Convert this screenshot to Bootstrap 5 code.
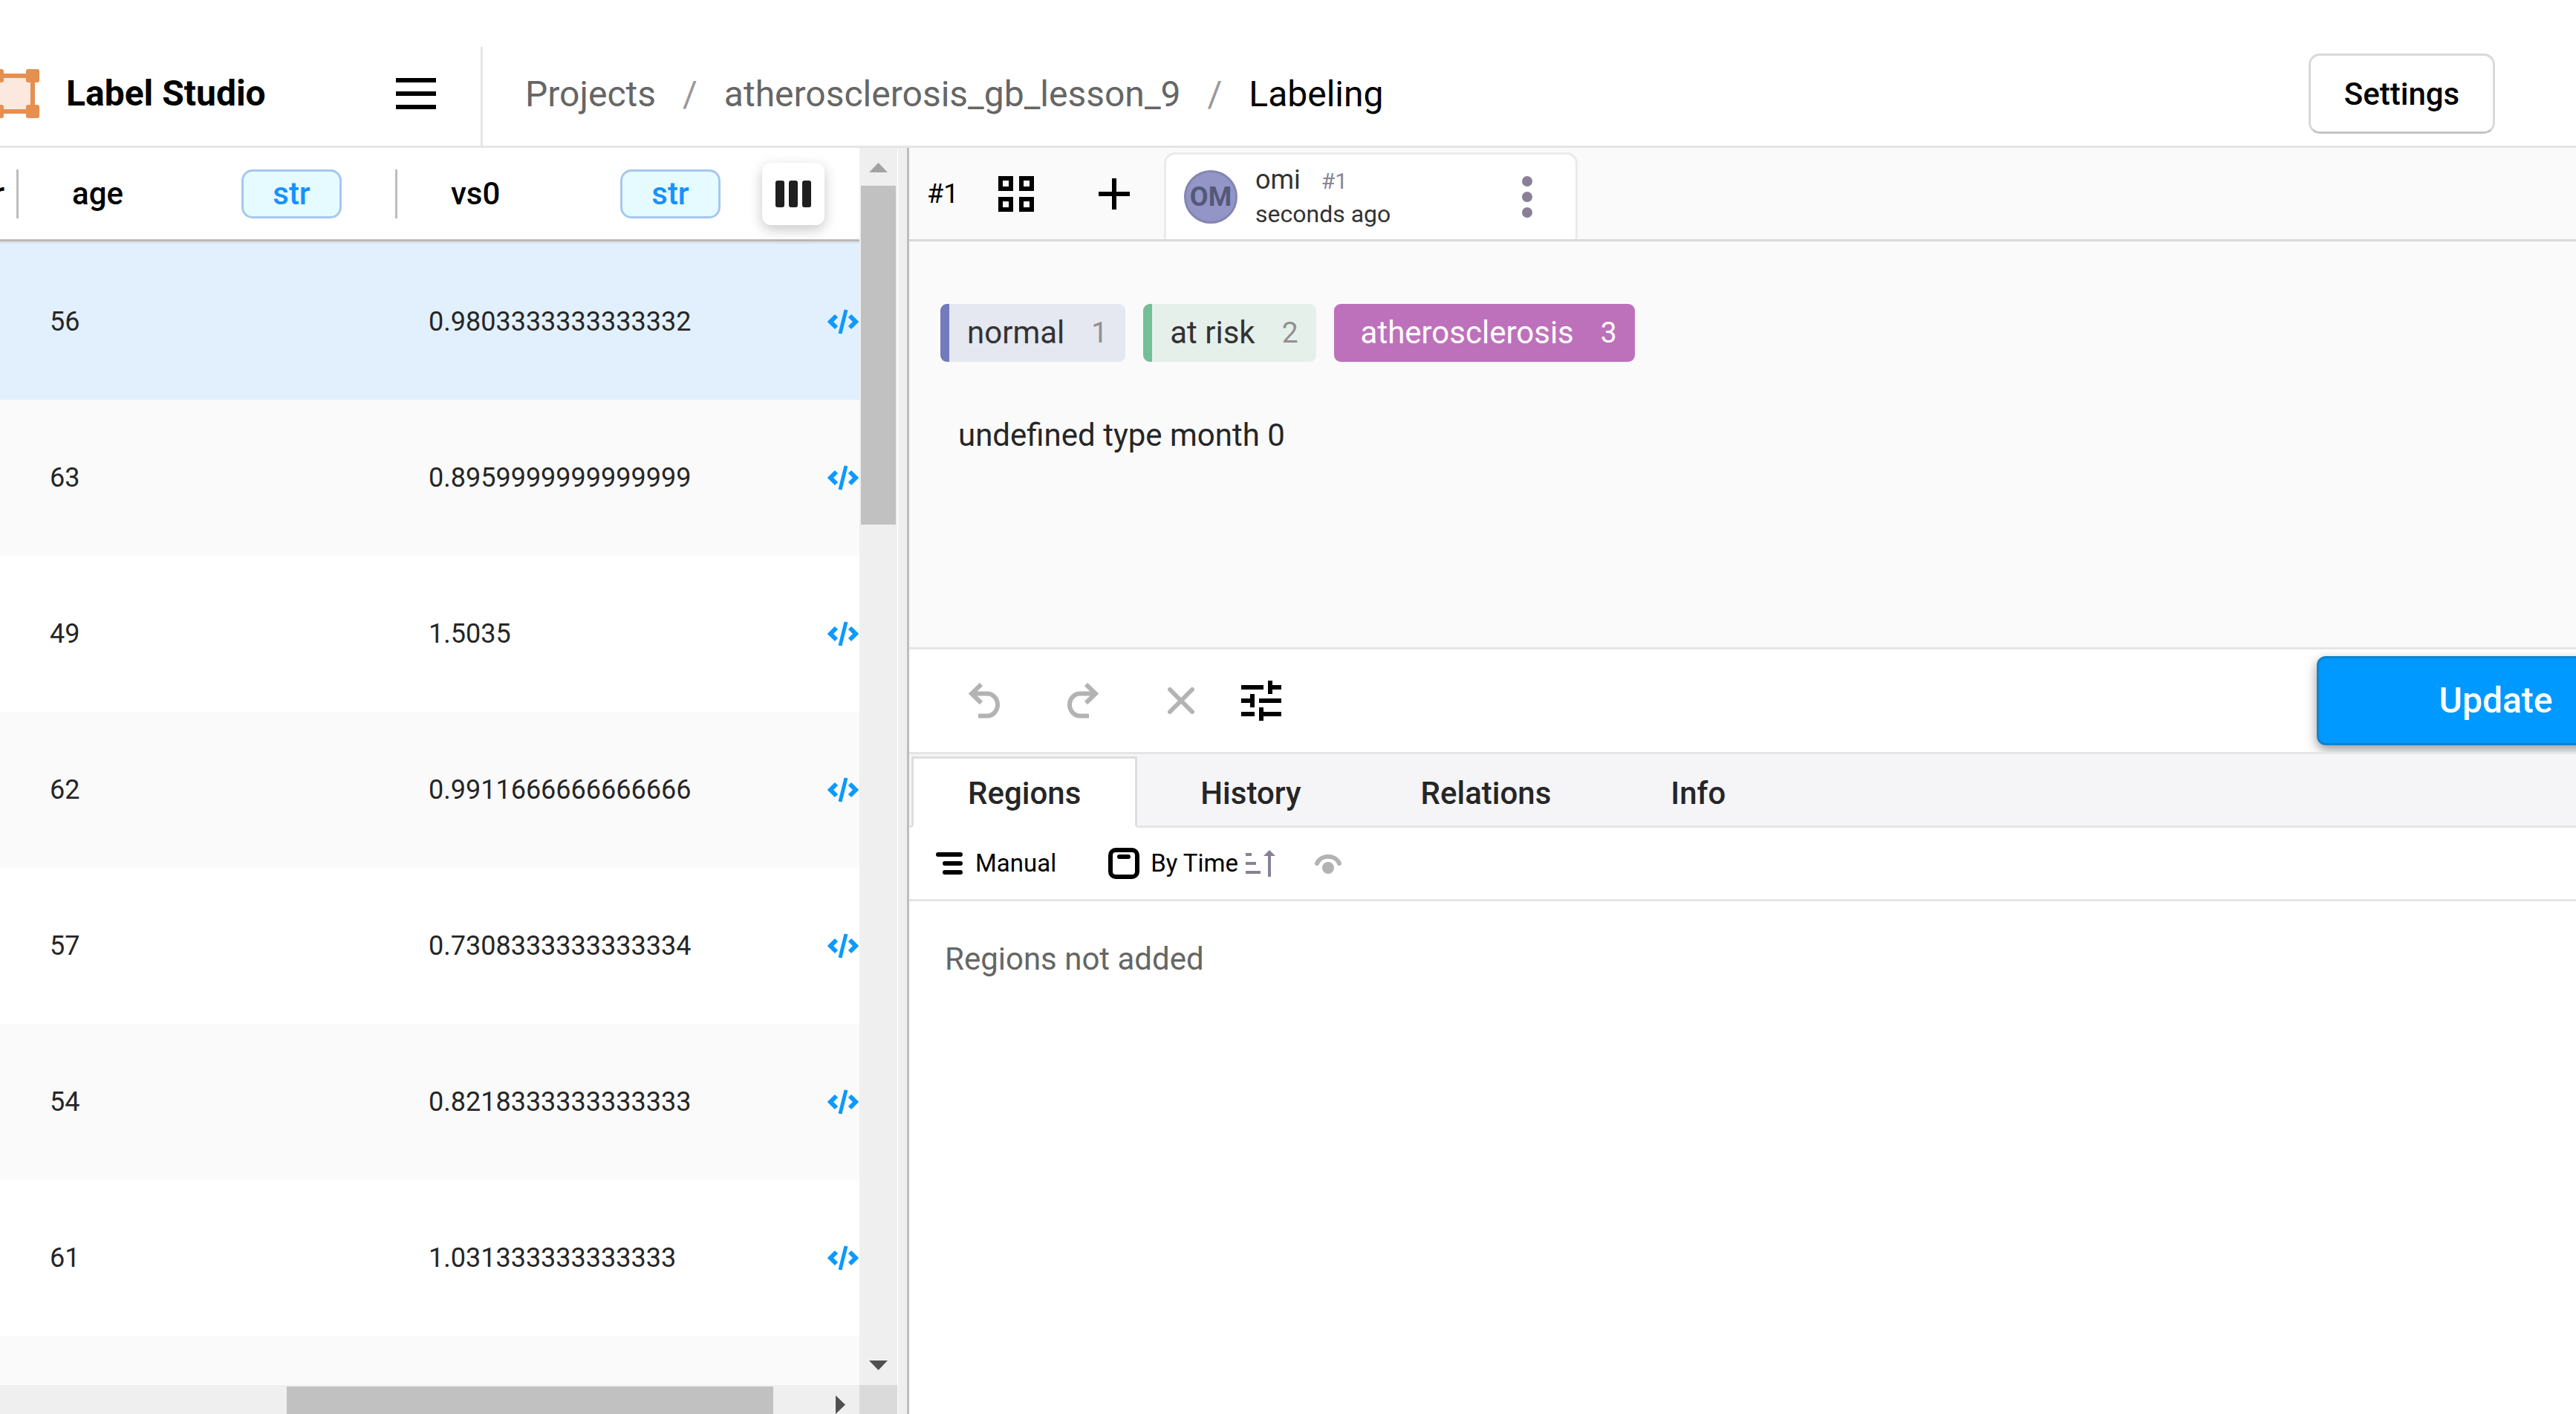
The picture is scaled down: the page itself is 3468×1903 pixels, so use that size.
<!DOCTYPE html>
<html lang="en">
<head>
<meta charset="utf-8">
<meta name="viewport" content="width=device-width, initial-scale=1">
<title>Label Studio</title>
<link href="https://cdn.jsdelivr.net/npm/bootstrap@5.3.0/dist/css/bootstrap.min.css" rel="stylesheet">
<style>
  :root { --rule: #e5e5e5; --split: #bdbdbd; --track: #efefef; --thumb: #c1c1c1; --panel: #fafafa; --muted: #666; --mauve: #898098; }
  body { font-family: Roboto, "Liberation Sans", sans-serif; font-size: 42px; line-height: 48px; color: #262626; background: #fff; }
  button { line-height: inherit; }
  svg { display: block; flex: none; }
  .plain-btn { background: none; border: 0; padding: 0; color: inherit; }

  /* top bar */
  .topbar { padding-top: 56px; border-bottom: 3px solid var(--rule); }
  .topbar-inner { height: 140px; }
  .brand { width: 647px; padding-right: 60px; font-size: 48px; font-weight: 700; color: #000; }
  .brand-link { color: #000; gap: 36px; }
  .crumbs { --bs-breadcrumb-divider: "/"; --bs-breadcrumb-item-padding-x: 36px; --bs-breadcrumb-divider-color: #999; font-size: 48px; padding: 0 0 6px 57px; height: 133px; border-left: 3px solid var(--rule); }
  .crumbs a { color: var(--muted); }
  .crumbs .breadcrumb-item.active { color: #000; }
  .settings-btn { --bs-btn-border-radius: 15px; width: 251px; height: 108px; margin-right: 109px; font-size: 42px; font-weight: 500; color: #000; background: #fff; border: 3px solid #d9d9d9; border-bottom-color: #c4c4c4; }

  /* data table */
  .data-pane { flex: 0 0 1224px; border-right: 3px solid var(--split); }
  .data-table { table-layout: fixed; width: 100%; border-collapse: collapse; }
  .data-table th { padding: 0 0 3px; background: #dde2ea; font-weight: 500; color: #000; }
  .head-cell { height: 126px; background: #fff; border-bottom: 3px solid #b9b9b9; overflow: hidden; }
  .head-cell.bars { overflow: visible; }
  .col-name { height: 66px; border-left: 3px solid #bdbdbd; padding-left: 72px; }
  .type-tag { width: 135px; height: 66px; border: 3px solid #a6c8ee; border-radius: 15px; background: #e6fbff; color: #1890ff; font-weight: 500; }
  .columns-btn { width: 84px; height: 84px; border-radius: 12px; background: #fff; border: 0; padding: 0; box-shadow: 0 6px 18px rgba(0,0,0,.22); }
  .data-table td { height: 210px; padding: 0 0 0 45px; font-size: 36px; vertical-align: middle; }
  .data-table td:first-child { padding: 0; }
  .data-table td.code-cell { padding: 0 1px 0 0; }
  .data-table tbody tr:nth-child(even) { background: var(--panel); }
  .data-table tbody tr.current { background: #e2f0fd; }
  .vbar { width: 51px; background: var(--track); padding: 20px 2px; }
  .vthumb { height: 456px; background: var(--thumb); margin-top: 18px; }
  .gutter { flex: none; width: 13px; background: var(--track); border-left: 1px solid #fff; }
  .hbar { height: 39px; background: var(--track); padding: 2px 19px 0 386px; }
  .hthumb { width: 655px; background: var(--thumb); }
  .corner { width: 51px; background: #dadada; }

  /* annotation area */
  .anno-bar { height: 126px; background: var(--panel); border-bottom: 3px solid #d9d9d9; padding-left: 24px; color: #000; }
  .task-id { font-size: 36px; width: 96px; }
  .anno-tab { width: 557px; height: 117px; border: 3px solid #ebebeb; border-bottom: 0; border-radius: 15px 15px 0 0; background: #fff; padding: 0 58px 0 24px; }
  .avatar { width: 72px; height: 72px; background: #9295c6; border: 3px solid #8386b2; color: #555877; font-size: 36px; font-weight: 700; flex: none; }
  .anno-name { font-size: 36px; line-height: 45px; color: #333; }
  .anno-num { font-size: 30px; color: #8a8494; margin-left: 28px; }
  .anno-when { font-size: 32px; line-height: 45px; color: #333; }
  .work-area { height: 549px; background: var(--panel); border-bottom: 3px solid var(--rule); padding: 84px 42px 0; }
  .label-chip { height: 78px; border: 0; border-left: 12px solid; border-radius: 9px; padding: 0 24px; gap: 36px; color: #333; }
  .label-chip .hint { font-size: 39px; color: #909090; }
  .chip-normal { background: #e5e7f1; border-color: #717bbe; }
  .chip-risk { background: #e5f0eb; border-color: #73bf98; }
  .chip-athero { background: #bd71bb; border-color: #bd71bb; color: #fff; }
  .chip-athero .hint { color: #fff; }
  .task-text { padding: 75px 24px 0; }
  .tool-row { height: 141px; border-bottom: 3px solid var(--rule); padding-left: 80px; overflow: hidden; }
  .update-btn { --bs-btn-border-radius: 12px; width: 482px; height: 120px; margin-right: -133px; background: #09f; border: 3px solid #0d83d0; color: #fff; font-size: 48px; font-weight: 500; box-shadow: 0 6px 15px rgba(0,0,0,.4); flex: none; }

  /* side tabs */
  .side-tabs { --bs-nav-tabs-border-width: 3px; --bs-nav-tabs-border-color: var(--rule); --bs-nav-tabs-border-radius: 0; height: 99px; background: #f5f5f8; padding: 3px 3px 0; gap: 9px; }
  .side-tabs .nav-link { height: 96px; padding: 4px 73px 0; font-weight: 500; color: #262626; }
  .side-tabs .nav-link.active { border-color: #dedede #dedede #fff; color: #262626; background: #fff; }
  .sort-row { height: 99px; border-bottom: 3px solid var(--rule); padding-left: 36px; font-size: 33px; font-weight: 500; color: #000; }
  .empty-note { padding: 54px 48px; color: var(--muted); }
</style>
</head>
<body class="vh-100 d-flex flex-column overflow-hidden">

<header class="topbar flex-shrink-0">
  <div class="topbar-inner d-flex align-items-center">
    <div class="brand d-flex align-items-center justify-content-between">
      <a href="#" class="brand-link d-flex align-items-center text-decoration-none">
        <svg width="53" height="66" viewBox="0 0 53 66" aria-hidden="true">
          <rect x="-13" y="9" width="57" height="48" fill="#fbe9df" stroke="#e58f51" stroke-width="6"/>
          <g fill="#e58f51"><rect x="-13" width="18" height="18" rx="3"/><rect x="35" width="18" height="18" rx="3"/><rect x="-13" y="48" width="18" height="18" rx="3"/><rect x="35" y="48" width="18" height="18" rx="3"/></g>
        </svg>
        <span>Label Studio</span>
      </a>
      <button class="plain-btn" aria-label="Menu">
        <svg width="54" height="42" viewBox="0 0 54 42"><path d="M0 3h54M0 21h54M0 39h54" stroke="#000" stroke-width="6"/></svg>
      </button>
    </div>
    <nav class="d-flex flex-fill align-self-end" aria-label="breadcrumb">
      <ol class="breadcrumb crumbs mb-0 align-items-center">
        <li class="breadcrumb-item"><a href="#" class="text-decoration-none">Projects</a></li>
        <li class="breadcrumb-item"><a href="#" class="text-decoration-none">atherosclerosis_gb_lesson_9</a></li>
        <li class="breadcrumb-item active" aria-current="page">Labeling</li>
      </ol>
    </nav>
    <button class="btn settings-btn p-0">Settings</button>
  </div>
</header>

<main class="d-flex flex-fill" style="min-height:0">
  <section class="data-pane d-flex">
    <div class="d-flex flex-column flex-fill">
      <div class="d-flex flex-fill" style="min-height:0">
        <div class="flex-fill overflow-hidden">
          <table class="data-table">
            <colgroup><col style="width:22px"><col style="width:510px"><col style="width:494px"><col></colgroup>
            <thead>
              <tr>
                <th><div class="head-cell d-flex align-items-center justify-content-end"><span class="pe-3">r</span></div></th>
                <th><div class="head-cell d-flex align-items-center justify-content-between" style="padding-right:72px"><span class="col-name d-flex align-items-center">age</span><span class="type-tag d-flex align-items-center justify-content-center">str</span></div></th>
                <th><div class="head-cell d-flex align-items-center justify-content-between" style="padding-right:56px"><span class="col-name d-flex align-items-center">vs0</span><span class="type-tag d-flex align-items-center justify-content-center">str</span></div></th>
                <th><div class="head-cell bars d-flex align-items-center"><button class="columns-btn d-flex align-items-center justify-content-center" aria-label="Columns"><svg width="48" height="36" viewBox="0 0 48 36" fill="#1f1f1f"><rect width="12" height="36" rx="3"/><rect x="18" width="12" height="36" rx="3"/><rect x="36" width="12" height="36" rx="3"/></svg></button></div></th>
              </tr>
            </thead>
            <tbody id="rows"></tbody>
          </table>
        </div>
        <div class="vbar d-flex flex-column flex-shrink-0">
          <svg class="mx-auto" width="25" height="13" viewBox="0 0 25 13"><path d="M12.500 0 25 13H0z" fill="#a3a3a3"/></svg>
          <div class="vthumb"></div>
          <svg class="mx-auto mt-auto" width="25" height="13" viewBox="0 0 25 13"><path d="M0 0h25L12.500 13z" fill="#505050"/></svg>
        </div>
      </div>
      <div class="d-flex flex-shrink-0">
        <div class="hbar d-flex flex-fill justify-content-between">
          <div class="hthumb"></div>
          <svg class="align-self-end" width="13" height="25" viewBox="0 0 13 25"><path d="M0 0 13 12.500 0 25z" fill="#505050"/></svg>
        </div>
        <div class="corner"></div>
      </div>
    </div>
    <div class="gutter"></div>
  </section>

  <section class="flex-fill d-flex flex-column overflow-hidden">
    <div class="anno-bar d-flex align-items-center flex-shrink-0">
      <span class="task-id">#1</span>
      <button class="plain-btn" aria-label="View all"><svg width="48" height="48" viewBox="0 0 48 48" fill="none" stroke="#000" stroke-width="6"><path d="M3 3h14v14H3zM31 3h14v14H31zM3 31h14v14H3zM31 31h14v14H31z"/></svg></button>
      <button class="plain-btn" style="margin:0 46px 0 87px" aria-label="Add annotation"><svg width="42" height="42" viewBox="0 0 42 42"><path d="M21 0v42M0 21h42" stroke="#000" stroke-width="6"/></svg></button>
      <div class="anno-tab d-flex align-items-center align-self-end">
        <span class="avatar rounded-circle d-flex align-items-center justify-content-center">OM</span>
        <div class="flex-fill ps-4">
          <div class="anno-name">omi<span class="anno-num">#1</span></div>
          <div class="anno-when">seconds ago</div>
        </div>
        <button class="plain-btn" aria-label="More"><svg width="14" height="56" viewBox="0 0 14 56" fill="#898098"><circle cx="7" cy="7" r="7"/><circle cx="7" cy="28" r="7"/><circle cx="7" cy="49" r="7"/></svg></button>
      </div>
    </div>

    <div class="work-area flex-shrink-0">
      <div class="d-flex gap-4">
        <button class="label-chip chip-normal d-flex align-items-center">normal<span class="hint">1</span></button>
        <button class="label-chip chip-risk d-flex align-items-center">at risk<span class="hint">2</span></button>
        <button class="label-chip chip-athero d-flex align-items-center">atherosclerosis<span class="hint">3</span></button>
      </div>
      <div class="task-text">undefined type month 0</div>
    </div>

    <div class="tool-row d-flex align-items-center flex-shrink-0">
      <button class="plain-btn" aria-label="Undo"><svg width="43" height="48" viewBox="0 0 43 48" fill="none" stroke="#b3b3b3" stroke-width="6"><path d="M17 2 4 14.500 17 27M5 14.500h20a14 15 0 0 1 0 30H13"/></svg></button>
      <button class="plain-btn" style="margin:0 93px 0 89px" aria-label="Redo"><svg width="43" height="48" viewBox="0 0 43 48" fill="none" stroke="#b3b3b3" stroke-width="6"><path d="M26 2l13 12.500L26 27M38 14.500H18a14 15 0 0 0 0 30h12"/></svg></button>
      <button class="plain-btn" aria-label="Reset"><svg width="36" height="36" viewBox="0 0 36 36"><path d="M3 3l30 30M33 3 3 33" stroke="#b3b3b3" stroke-width="6" stroke-linecap="round"/></svg></button>
      <button class="plain-btn" style="margin-left:63px" aria-label="Preferences"><svg width="54" height="54" viewBox="0 0 54 54"><path d="M0 9h30M39 0v18M39 9h15M0 27h15M15 18v18M24 27h30M0 45h18M27 36v18M27 45h27" stroke="#000" stroke-width="6"/></svg></button>
      <button class="btn update-btn ms-auto p-0">Update</button>
    </div>

    <ul class="nav nav-tabs side-tabs flex-shrink-0">
      <li class="nav-item"><button class="nav-link active">Regions</button></li>
      <li class="nav-item"><button class="nav-link">History</button></li>
      <li class="nav-item"><button class="nav-link">Relations</button></li>
      <li class="nav-item"><button class="nav-link">Info</button></li>
    </ul>

    <div class="sort-row d-flex align-items-center flex-shrink-0">
      <button class="plain-btn d-flex align-items-center">
        <svg width="36" height="30" viewBox="0 0 36 30"><path d="M3 3h30M12 15h21M12 27h21" stroke="#000" stroke-width="6" stroke-linecap="round"/></svg>
        <span style="margin:0 70px 0 17px">Manual</span>
      </button>
      <button class="plain-btn d-flex align-items-center">
        <svg width="42" height="42" viewBox="0 0 42 42" fill="none" stroke="#000" stroke-width="6"><rect x="3" y="3" width="36" height="36" rx="7"/><path d="M15 12h12" stroke-linecap="round"/></svg>
        <span style="margin:0 10px 0 15px">By Time</span>
        <svg width="40" height="36" viewBox="0 0 40 36" fill="#898098"><path d="M0 4h8v4H0zM0 16h14v4H0zM0 28h20v4H0zM24 8 32 0l8 8h-6v28h-4V8z"/></svg>
      </button>
      <button class="plain-btn" style="margin-left:53px" aria-label="Toggle visibility"><svg width="36" height="28" viewBox="0 0 36 28"><path d="M3 14a16 14 0 0 1 30 0" fill="none" stroke="#b3b3b3" stroke-width="6" stroke-linecap="round"/><circle cx="18" cy="20" r="8" fill="#b3b3b3"/></svg></button>
    </div>

    <div class="empty-note">Regions not added</div>
  </section>
</main>

<script>
  const data = [
    [56, "0.9803333333333332"], [63, "0.8959999999999999"], [49, "1.5035"], [62, "0.9911666666666666"],
    [57, "0.7308333333333334"], [54, "0.8218333333333333"], [61, "1.031333333333333"], ["", ""]
  ];
  const code = '<svg class="ms-auto" width="42" height="34" viewBox="0 0 42 34" fill="none" stroke="#0d99ff" stroke-width="6"><path d="M12 9 4 17l8 8M30 9l8 8-8 8"/><path d="M25 1l-8 32" stroke-width="5"/></svg>';
  document.getElementById("rows").innerHTML = data.map(([age, vs], i) =>
    `<tr class="${i ? "" : "current"}"><td></td><td>${age}</td><td>${vs}</td><td class="code-cell">${code}</td></tr>`).join("");
</script>
<script src="https://cdn.jsdelivr.net/npm/bootstrap@5.3.0/dist/js/bootstrap.bundle.min.js"></script>
</body>
</html>
